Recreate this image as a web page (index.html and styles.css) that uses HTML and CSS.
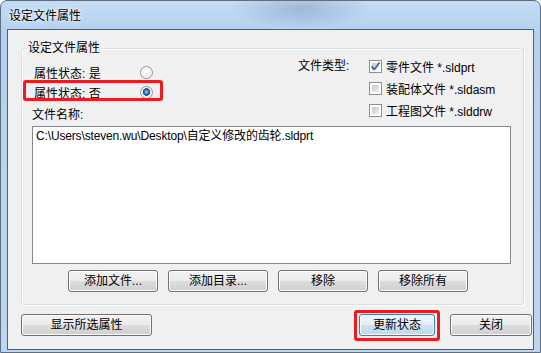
FILE: index.html
```html
<!DOCTYPE html>
<html lang="zh-CN">
<head>
<meta charset="utf-8">
<title>设定文件属性</title>
<link rel="stylesheet" href="styles.css">
</head>
<body>
<div class="window">
  <div class="titlebar"><span class="title">设定文件属性</span></div>
  <div class="client">
    <div class="group">
      <span class="legend">设定文件属性</span>
      <div class="top">
        <div class="left">
          <div class="opt"><span>属性状态: 是</span><span class="radio"></span></div>
          <div class="opt"><span>属性状态: 否</span><span class="radio checked"></span></div>
          <div class="fname">文件名称:</div>
        </div>
        <div class="types">
          <span class="types-label">文件类型:</span>
          <div class="checks">
            <div class="chk"><span class="box"><svg class="tick" width="11" height="11" viewBox="0 0 11 11"><path d="M1.6 5.4 L4.2 8.4 L9.6 1.4" fill="none" stroke="#4b6090" stroke-width="1.7"/></svg></span><span>零件文件 *.sldprt</span></div>
            <div class="chk"><span class="box"></span><span>装配体文件 *.sldasm</span></div>
            <div class="chk"><span class="box"></span><span>工程图文件 *.slddrw</span></div>
          </div>
        </div>
      </div>
      <div class="listbox"><div class="item">C:\Users\steven.wu\Desktop\自定义修改的齿轮.sldprt</div></div>
      <div class="btnrow">
        <button class="btn w90">添加文件...</button>
        <button class="btn w100">添加目录...</button>
        <button class="btn w90">移除</button>
        <button class="btn w90">移除所有</button>
      </div>
    </div>
    <div class="bottom">
      <button class="btn w131">显示所选属性</button>
      <button class="btn default w76">更新状态</button>
      <button class="btn w82">关闭</button>
    </div>
  </div>
  <div class="mark mark1"></div>
  <div class="mark mark2"></div>
</div>
</body>
</html>
```

FILE: styles.css
```css
* { box-sizing: border-box; }
html, body { margin: 0; padding: 0; }
body {
  width: 541px;
  height: 353px;
  overflow: hidden;
  font-family: "Liberation Sans", "Noto Sans CJK SC", sans-serif;
  font-size: 12px;
  color: #000;
}
.window {
  position: relative;
  width: 541px;
  height: 353px;
  border-radius: 7px 7px 0 0;
  border: 1px solid #5d6e80;
  background:
    radial-gradient(ellipse 70px 20px at 300px 8px, rgba(80,110,150,0.3), rgba(80,110,150,0) 100%),
    linear-gradient(180deg, #c4dcf4 0px, #b4d1ef 30px, #bcd6f1 100%);
}
.titlebar {
  height: 28px;
  display: flex;
  align-items: center;
  padding-left: 8px;
  padding-top: 1px;
}
.title {
  line-height: 16px;
  text-shadow: 0 0 6px rgba(255,255,255,0.95), 0 0 3px rgba(255,255,255,0.9);
}
.client {
  margin-left: 6px;
  width: 527px;
  height: 321px;
  border: 1px solid #52606e;
  background: #f0f0f0;
  display: flex;
  flex-direction: column;
}
.group {
  position: relative;
  margin: 18px 0 0 13px;
  width: 503px;
  height: 257px;
  border: 1px solid #d5dfe5;
  border-radius: 3px;
  box-shadow: inset 1px 1px 0 #fff, 1px 1px 0 #fff;
  padding: 6px 0 0 10px;
}
.legend {
  position: absolute;
  top: -9px;
  left: 5px;
  padding: 0 1px;
  line-height: 16px;
  background: #f0f0f0;
}
.top { display: flex; height: 70px; }
.left { width: 266px; padding-top: 7px; }
.opt {
  display: flex;
  align-items: center;
  justify-content: space-between;
  height: 20px;
  width: 119px;
  margin-left: 2px;
}
.radio {
  width: 13px;
  height: 13px;
  border-radius: 50%;
  border: 1px solid #939393;
  background: radial-gradient(circle at 45% 45%, #ffffff 0, #f4f4f4 35%, #d6d6d6 100%);
  box-shadow: inset 0 0 0 1px #fbfbfb;
}
.radio.checked {
  background:
    radial-gradient(circle at 50% 45%, #a8e4ff 0, #3b9be0 1.4px, #1f5fa6 2.8px, #3c4e63 3.6px, rgba(60,78,99,0) 4.1px),
    radial-gradient(circle at 45% 45%, #ffffff 0, #f4f4f4 35%, #d6d6d6 100%);
}
.fname { height: 20px; line-height: 20px; margin-top: 3px; }
.types { display: flex; }
.types-label { width: 71px; line-height: 22px; height: 22px; }
.checks { display: flex; flex-direction: column; }
.chk { display: flex; align-items: center; height: 22px; gap: 4px; }
.box {
  position: relative;
  width: 13px;
  height: 13px;
  margin-top: 1px;
  border: 1px solid #8f8f8f;
  padding: 2px;
  background: linear-gradient(135deg, #c4c4c4, #f2f2f2) content-box, #fdfdfd;
}
.tick { position: absolute; left: 0; top: 0; }
.listbox {
  margin-top: 1px;
  width: 479px;
  height: 138px;
  border: 1px solid #828790;
  background: #fff;
  padding: 1px 3px;
}
.item { line-height: 17px; white-space: nowrap; letter-spacing: -0.15px; }
.btnrow {
  display: flex;
  gap: 10px;
  margin-top: 6px;
  padding-left: 36px;
}
.btn {
  height: 22px;
  padding: 0;
  font: inherit;
  color: #000;
  border: 1px solid #707070;
  border-radius: 3px;
  box-shadow: inset 0 0 0 1px #fcfcfc;
  background: linear-gradient(180deg, #f2f2f2 0%, #ebebeb 50%, #dddddd 51%, #cfcfcf 100%);
  line-height: 18px;
  text-align: center;
}
.btn.default {
  border-color: #3c7fb1;
  box-shadow: inset 0 0 0 1px #f4fafe;
  background: linear-gradient(180deg, #eef6fc 0%, #e2eff9 50%, #cde3f3 51%, #bcd8ee 100%);
}
.w90 { width: 90px; }
.w100 { width: 100px; }
.w131 { width: 131px; }
.w76 { width: 76px; margin-left: auto; }
.w82 { width: 82px; }
.bottom {
  display: flex;
  gap: 15px;
  margin: 9px 1px 0 13px;
}
.mark {
  position: absolute;
  border: 3px solid #ea1c22;
  border-radius: 3px;
}
.mark1 { left: 22px; top: 79px; width: 140px; height: 21px; }
.mark2 { left: 353px; top: 309px; width: 86px; height: 31px; }
```
